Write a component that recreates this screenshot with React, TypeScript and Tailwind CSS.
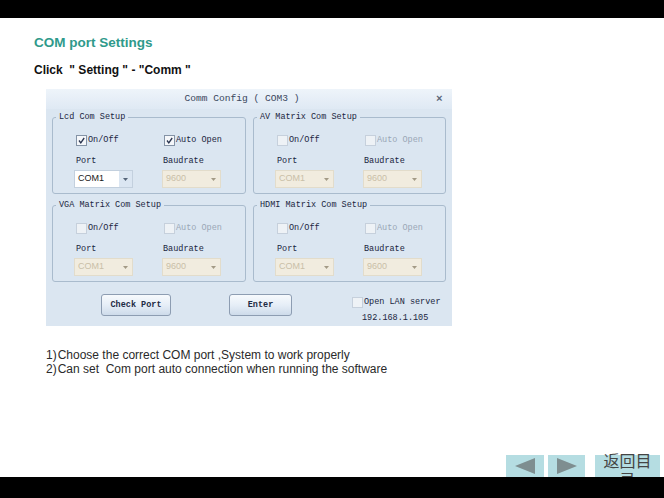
import React from "react";

type CheckProps = { checked?: boolean; disabled?: boolean };

function Check({ checked, disabled }: CheckProps) {
    return (
        <span
            className={`w-[11px] h-[11px] shrink-0 border flex items-center justify-center ${
                disabled ? "border-[#c6d0dc] bg-[#eef2f6]" : "border-[#8493a6] bg-[#f5f7fa]"
            }`}
        >
            {checked && (
                <svg width="9" height="9" viewBox="0 0 9 9">
                    <path d="M2 4.5 L3.8 6.8 L7.2 2" fill="none" stroke="#2a3550" strokeWidth="1.3" />
                </svg>
            )}
        </span>
    );
}

function Combo({ value, active }: { value: string; active?: boolean }) {
    return (
        <div
            className={`w-[59px] h-[18px] flex items-center border ${
                active ? "bg-white border-[#c3d0de]" : "bg-[#f1ecdf] border-[#e2dccb]"
            }`}
        >
            <span
                className={`flex-1 pl-[3px] text-[9px] font-['Liberation_Sans',sans-serif] ${
                    active ? "text-[#1a1a1a]" : "text-[#c9bfa8]"
                }`}
            >
                {value}
            </span>
            <span
                className={`w-[13px] h-full flex items-center justify-center ${active ? "bg-[#dbe6f2]" : ""}`}
            >
                <svg width="5" height="3" viewBox="0 0 5 3">
                    <path d="M0 0 L5 0 L2.5 3 Z" fill={active ? "#55657a" : "#a39a86"} />
                </svg>
            </span>
        </div>
    );
}

type GroupProps = { title: string; on?: boolean; auto?: boolean; active?: boolean };

function Group({ title, on, auto, active }: GroupProps) {
    return (
        <fieldset className="border border-[#a9bbcd] rounded-[3px] h-[82px]">
            <legend className="ml-[3px] px-[3px] leading-[11px] text-[#1a2540]">{title}</legend>
            <div className="grid grid-cols-[88px_80px] mt-[11px] pl-[23px]">
                <div className="flex items-center gap-[1px] h-[12px]">
                    <Check checked={on} disabled={!active} />
                    <span>On/Off</span>
                </div>
                <div className="flex items-center gap-[1px] h-[12px]">
                    <Check checked={auto} disabled={!active} />
                    <span className={active ? "" : "text-[#9aa6b6]"}>Auto Open</span>
                </div>
                <div className="mt-[10px] leading-[11px]">Port</div>
                <div className="mt-[10px] leading-[11px] -ml-[1px]">Baudrate</div>
                <div className="mt-[3px] -ml-[2px]">
                    <Combo value="COM1" active={active} />
                </div>
                <div className="mt-[3px] -ml-[2px]">
                    <Combo value="9600" />
                </div>
            </div>
        </fieldset>
    );
}

function WinButton({ label, width }: { label: string; width: string }) {
    return (
        <div
            className={`${width} h-[22px] border border-[#8d9db2] rounded-[3px] bg-gradient-to-b from-[#f7fafd] via-[#e6eef7] to-[#cddbea] flex items-center justify-center font-bold text-[#1e2b45]`}
        >
            {label}
        </div>
    );
}

export default function App() {
    return (
        <div className="h-[498px] w-[664px] bg-white flex flex-col overflow-hidden">
            <div className="h-[18px] bg-black shrink-0" />

            <div className="flex-1 pl-[34px]">
                <h1 className="mt-[17px] text-[13.5px] leading-[16px] font-bold text-[#2f9a8b] font-['Liberation_Sans',sans-serif]">
                    COM port Settings
                </h1>
                <p className="mt-[12px] text-[12px] leading-[14px] font-bold text-[#111] font-['Liberation_Sans',sans-serif] whitespace-pre">
                    {'Click  " Setting " - "Comm "'}
                </p>

                {/* dialog screenshot */}
                <div className="ml-[12px] mt-[12px] w-[406px] h-[237px] bg-[#dbe6f1] font-['Liberation_Mono',monospace] text-[8.5px] text-[#1a2540]">
                    <div className="h-[20px] bg-gradient-to-b from-[#eef4fa] to-[#dfe9f4] flex items-center">
                        <span className="flex-1 text-center text-[9.6px] pl-[2px] whitespace-pre text-[#39465c]">
                            Comm Config ( COM3 )
                        </span>
                        <span className="w-[16px] text-[11px] font-bold text-[#5a6577]">×</span>
                    </div>
                    <div className="grid grid-cols-[194px_193px] gap-x-[7px] gap-y-[6px] px-[6px] pt-[3px]">
                        <Group title="Lcd Com Setup" on auto active />
                        <Group title="AV Matrix Com Setup" />
                        <Group title="VGA Matrix Com Setup" />
                        <Group title="HDMI Matrix Com Setup" />
                    </div>
                    <div className="flex items-start pl-[55px] mt-[12px]">
                        <WinButton label="Check Port" width="w-[70px]" />
                        <div className="ml-[58px]">
                            <WinButton label="Enter" width="w-[63px]" />
                        </div>
                        <div className="ml-[60px] mt-[2px]">
                            <div className="flex items-center gap-[1px] h-[12px]">
                                <Check disabled />
                                <span>Open LAN server</span>
                            </div>
                            <div className="mt-[4px] ml-[10px]">192.168.1.105</div>
                        </div>
                    </div>
                </div>

                <div className="ml-[12px] mt-[22px] text-[12px] leading-[14px] text-[#2a2a2a] font-['Liberation_Sans',sans-serif] whitespace-pre">
                    <p>
                        1)<span className="ml-[1px]">Choose the correct COM port ,System to work properly</span>
                    </p>
                    <p>
                        2)<span className="ml-[1px]">Can set  Com port auto connection when running the software</span>
                    </p>
                </div>
            </div>

            <div className="flex h-[22px] shrink-0 pl-[506px] gap-[4px]">
                <div className="w-[38px] bg-[#b5dde2] flex items-center justify-center">
                    <svg width="20" height="16" viewBox="0 0 20 16">
                        <path d="M0 8 L20 0 L20 16 Z" fill="#7e8e90" />
                    </svg>
                </div>
                <div className="w-[37px] bg-[#b5dde2] flex items-center justify-center">
                    <svg width="20" height="16" viewBox="0 0 20 16">
                        <path d="M20 8 L0 0 L0 16 Z" fill="#7e8e90" />
                    </svg>
                </div>
                <div className="ml-[6px] w-[65px] bg-[#b5dde2] flex justify-center">
                    <span className="w-[52px] -mt-[4px] text-[16px] leading-[19px] text-center text-[#444] font-['Noto_Sans_CJK_SC',sans-serif]">
                        返回目录
                    </span>
                </div>
            </div>
            <div className="h-[21px] bg-black shrink-0 relative" />
        </div>
    );
}
